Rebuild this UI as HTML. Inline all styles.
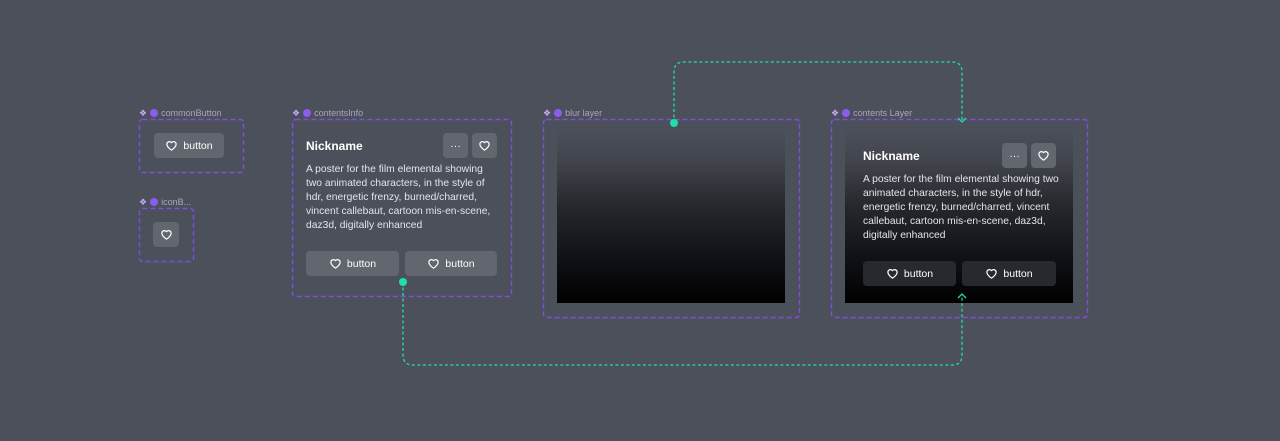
<!DOCTYPE html>
<html><head><meta charset="utf-8"><style>
*{margin:0;padding:0;box-sizing:border-box}
body{width:1280px;height:441px;background:#4b505a;font-family:"Liberation Sans",sans-serif;position:relative;overflow:hidden;color:#fff}
.abs{position:absolute}
.lbl{position:absolute;font-size:9px;color:#a9a6bd;display:flex;align-items:center;gap:3px;height:10px}
.lbl .d{color:#c7a8f5;font-size:9px}
.lbl .c{width:8px;height:8px;border-radius:50%;background:#8b5cf0}
.btn{position:absolute;background:#62666f;border-radius:4px;display:flex;align-items:center;justify-content:center;gap:5px;font-size:10.5px;color:#fff}
.dk{background:#27292e}
.nick{position:absolute;font-size:12px;font-weight:bold}
.txt{position:absolute;font-size:10.3px;line-height:14px;color:#e4e5e8}
</style></head><body>
<svg width="0" height="0" style="position:absolute"><defs><symbol id="h" viewBox="0 0 24 24"><path d="M12 20.5s-8.5-5-8.5-11A4.7 4.7 0 0 1 12 6.8a4.7 4.7 0 0 1 8.5 2.7c0 6-8.5 11-8.5 11z" fill="none" stroke="#fff" stroke-width="2.2" stroke-linejoin="round"/></symbol></defs></svg>

<div class="lbl" style="left:139px;top:108px"><span class="d">❖</span><span class="c"></span>commonButton</div>
<div class="btn" style="left:154px;top:133px;width:70px;height:25px"><svg width="13" height="13"><use href="#h"/></svg>button</div>

<div class="lbl" style="left:139px;top:197px"><span class="d">❖</span><span class="c"></span>iconB...</div>
<div class="btn" style="left:153px;top:222px;width:26px;height:25px"><svg width="13" height="13"><use href="#h"/></svg></div>

<div class="lbl" style="left:292px;top:108px"><span class="d">❖</span><span class="c"></span>contentsInfo</div>
<div class="nick" style="left:306px;top:139px">Nickname</div>
<div class="btn" style="left:443px;top:133px;width:25px;height:25px">···</div>
<div class="btn" style="left:472px;top:133px;width:25px;height:25px"><svg width="13" height="13"><use href="#h"/></svg></div>
<div class="txt" style="left:306px;top:163px;width:188px">A poster for the film elemental showing two animated characters, in the style of hdr, energetic frenzy, burned/charred, vincent callebaut, cartoon mis-en-scene, daz3d, digitally enhanced</div>
<div class="btn" style="left:306px;top:251px;width:93px;height:25px"><svg width="13" height="13"><use href="#h"/></svg>button</div>
<div class="btn" style="left:405px;top:251px;width:92px;height:25px"><svg width="13" height="13"><use href="#h"/></svg>button</div>

<div class="lbl" style="left:543px;top:108px"><span class="d">❖</span><span class="c"></span>blur layer</div>
<div class="abs" style="left:557px;top:125px;width:228px;height:178px;background:linear-gradient(#4b505a 0%,#42454d 20%,#26282e 45%,#101116 75%,#000 100%)"></div>

<div class="lbl" style="left:831px;top:108px"><span class="d">❖</span><span class="c"></span>contents Layer</div>
<div class="abs" style="left:845px;top:125px;width:228px;height:178px;background:linear-gradient(#4b505a 0%,#42454d 20%,#26282e 45%,#101116 75%,#000 100%)"></div>
<div class="nick" style="left:863px;top:149px">Nickname</div>
<div class="btn" style="left:1002px;top:143px;width:25px;height:25px">···</div>
<div class="btn" style="left:1031px;top:143px;width:25px;height:25px"><svg width="13" height="13"><use href="#h"/></svg></div>
<div class="txt" style="left:863px;top:173px;width:196px">A poster for the film elemental showing two animated characters, in the style of hdr, energetic frenzy, burned/charred, vincent callebaut, cartoon mis-en-scene, daz3d, digitally enhanced</div>
<div class="btn dk" style="left:863px;top:261px;width:93px;height:25px"><svg width="13" height="13"><use href="#h"/></svg>button</div>
<div class="btn dk" style="left:962px;top:261px;width:94px;height:25px"><svg width="13" height="13"><use href="#h"/></svg>button</div>

<svg class="abs" style="left:0;top:0" width="1280" height="441">
<g fill="none" stroke="#7d4fdc" stroke-width="1.4" stroke-dasharray="5 3">
<rect x="139.5" y="119.5" width="104" height="53" rx="3"/>
<rect x="139.5" y="208.5" width="54" height="53" rx="3"/>
<rect x="292.5" y="119.5" width="219" height="177" rx="3"/>
<rect x="543.5" y="119.5" width="256" height="198" rx="3"/>
<rect x="831.5" y="119.5" width="256" height="198" rx="3"/>
</g>
<g fill="none" stroke="#1ee0a8" stroke-width="1.3" stroke-dasharray="3 2.5">
<path d="M674 123 V72 Q674 62 684 62 H952 Q962 62 962 72 V122"/>
<path d="M403 282 V355 Q403 365 413 365 H952 Q962 365 962 355 V296"/>
</g>
<g fill="none" stroke="#1ee0a8" stroke-width="1.3">
<path d="M958 118 L962 122 L966 118"/><path d="M958 298 L962 294 L966 298"/>
</g>
<circle cx="674" cy="123" r="4" fill="#1ee0a8"/>
<circle cx="403" cy="282" r="4" fill="#1ee0a8"/>
</svg>
</body></html>
